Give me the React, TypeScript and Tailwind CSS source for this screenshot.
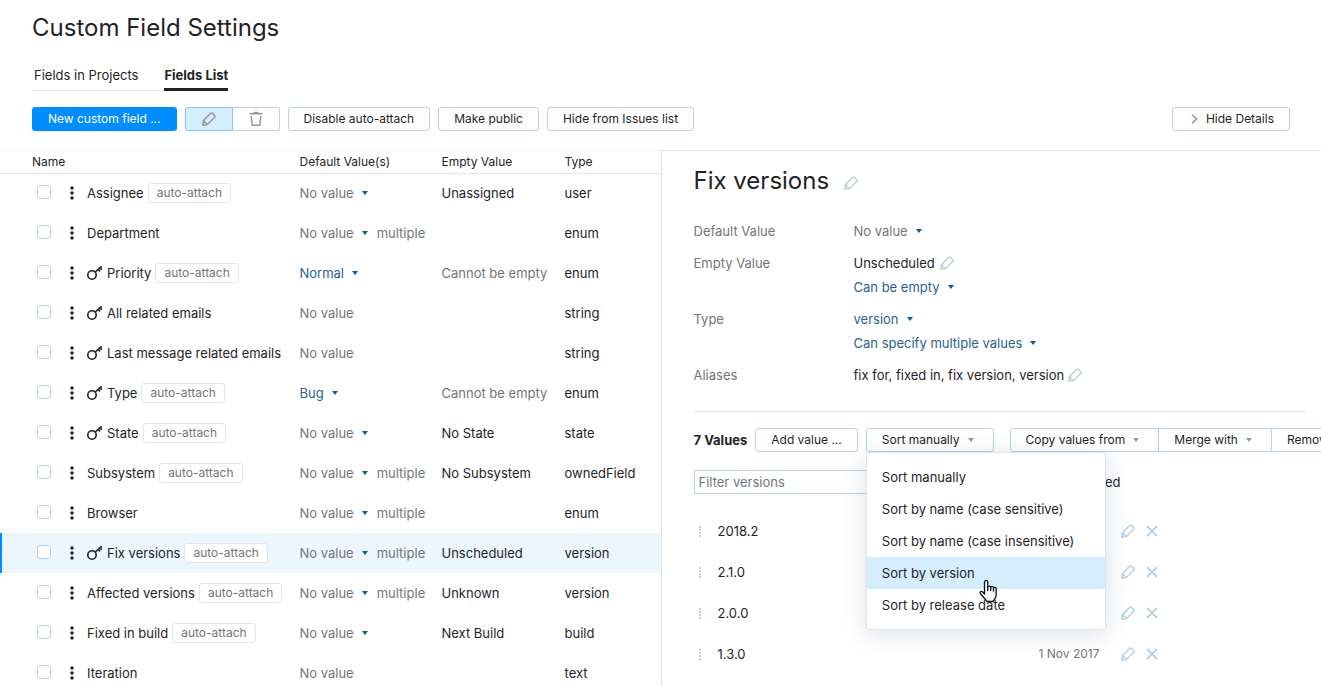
import React, { useState } from 'react';

interface Field {
  name: string;
  isPublic?: boolean;
  autoAttach?: boolean;
  value?: string;
  fixed?: boolean;
  multiple?: boolean;
  empty?: string;
  required?: boolean;
  type: string;
}

const fields: Field[] = [
  { name: 'Assignee', autoAttach: true, empty: 'Unassigned', type: 'user' },
  { name: 'Department', multiple: true, type: 'enum' },
  { name: 'Priority', isPublic: true, autoAttach: true, value: 'Normal', required: true, type: 'enum' },
  { name: 'All related emails', isPublic: true, fixed: true, type: 'string' },
  { name: 'Last message related emails', isPublic: true, fixed: true, type: 'string' },
  { name: 'Type', isPublic: true, autoAttach: true, value: 'Bug', required: true, type: 'enum' },
  { name: 'State', isPublic: true, autoAttach: true, empty: 'No State', type: 'state' },
  { name: 'Subsystem', autoAttach: true, multiple: true, empty: 'No Subsystem', type: 'ownedField' },
  { name: 'Browser', multiple: true, type: 'enum' },
  { name: 'Fix versions', isPublic: true, autoAttach: true, multiple: true, empty: 'Unscheduled', type: 'version' },
  { name: 'Affected versions', autoAttach: true, multiple: true, empty: 'Unknown', type: 'version' },
  { name: 'Fixed in build', autoAttach: true, empty: 'Next Build', type: 'build' },
  { name: 'Iteration', fixed: true, type: 'text' },
];

const versions = [
  { name: '2018.2', date: '' },
  { name: '2.1.0', date: '' },
  { name: '2.0.0', date: '' },
  { name: '1.3.0', date: '1 Nov 2017' },
];

const sortOptions = [
  'Sort manually',
  'Sort by name (case sensitive)',
  'Sort by name (case insensitive)',
  'Sort by version',
  'Sort by release date',
];

const button = 'flex h-6 shrink-0 items-center whitespace-nowrap rounded-[3px] border border-[#b8d1e5] bg-white px-[15px] text-xs';

const Pencil = () => (
  <svg className="size-4" viewBox="0 0 16 16" fill="none" stroke="currentColor" strokeWidth="1.5" strokeLinejoin="round">
    <path d="M1.8 14.2 2.5 9.6 9.7 2.3a1.2 1.2 0 0 1 1.7 0l2.3 2.3a1.2 1.2 0 0 1 0 1.7l-7.3 7.2zM2.5 9.8l3.7 3.7" />
  </svg>
);

const Trash = () => (
  <svg className="size-4" viewBox="0 0 16 16" fill="none" stroke="currentColor" strokeWidth="1.5">
    <path d="M1.5 2.7h13M5.5 1.5h5M3.2 5l1 9.2h7.6l1-9.2" />
  </svg>
);

const Key = () => (
  <svg className="size-4 shrink-0" viewBox="0 0 16 16" fill="none" stroke="currentColor" strokeWidth="1.6">
    <circle cx="5" cy="10" r="4.2" />
    <path d="M8 7.2 14.8 1.4M11.2 4.4l1.9 2.2M13.1 2.9l1.7 1.9" />
  </svg>
);

const Close = () => (
  <svg className="size-4" viewBox="0 0 16 16" fill="none" stroke="currentColor" strokeWidth="2">
    <path d="m3 3 10 10M13 3 3 13" />
  </svg>
);

const Caret = () => (
  <svg className="h-1 w-1.5" viewBox="0 0 6 4" fill="currentColor">
    <path d="M0 0h6L3 4z" />
  </svg>
);

const Dots = () => (
  <svg className="h-4 w-1 text-[#1f2326]" viewBox="0 0 4 16" fill="currentColor">
    <circle cx="2" cy="3" r="1.7" />
    <circle cx="2" cy="8" r="1.7" />
    <circle cx="2" cy="13" r="1.7" />
  </svg>
);

const Grip = () => (
  <svg className="h-3 w-0.5 text-[#b8d1e5]" viewBox="0 0 2 12" fill="currentColor">
    <path d="M0 1h2v2H0zM0 4h2v2H0zM0 7h2v2H0zM0 10h2v2H0z" />
  </svg>
);

const Pointer = () => (
  <svg className="pointer-events-none absolute left-[111px] top-[126px] h-6 w-5" viewBox="0 0 20 24" fill="#f7f7f7" stroke="#111" strokeWidth="1.3" strokeLinejoin="round">
    <path d="M6.5 13V3a1.6 1.6 0 0 1 3.2 0v5.5a1.5 1.5 0 0 1 3 .3 1.4 1.4 0 0 1 2.800.6 1.3 1.3 0 0 1 2.700.7V16c0 2-1.200 3-1.600 4.500L15 22.500H9L7 20l-4.700-5.500c-1-1.600 1-2.800 2.200-1.700L6.500 15z" />
    <path d="M9.700 8.500V12M12.700 9v3M15.500 10v2.500" />
  </svg>
);

const Picker: React.FC<{ label: string; muted?: boolean }> = ({ label, muted }) => (
  <button className={muted ? 'flex items-center gap-2 text-[#737577]' : 'flex items-center gap-2 text-[#2a5f8f]'}>
    {label}
    <span className="mr-px text-[#0f5b99]"><Caret /></span>
  </button>
);

const FieldRow: React.FC<{ field: Field; selected: boolean; onSelect: () => void }> = ({ field, selected, onSelect }) => (
  <tr onClick={onSelect} className={selected ? 'h-10 bg-[#ebf6ff]' : 'h-10'}>
    <td className={selected ? 'border-l-2 border-[#008eff] p-0' : 'border-l-2 border-transparent p-0'}>
      <div className="flex items-center pl-[35px]">
        <input
          type="checkbox"
          aria-label={field.name}
          className="mb-0.5 size-3.5 appearance-none rounded-[3px] border border-[#b8d1e5] bg-white checked:bg-[#008eff]"
        />
        <button aria-label="More actions" className="ml-[19px] mr-[13px]"><Dots /></button>
        {field.isPublic && <span className="mr-1 text-[#1f2326]"><Key /></span>}
        <span className="whitespace-nowrap">{field.name}</span>
        {field.autoAttach && (
          <span className="ml-1 flex h-5 items-center whitespace-nowrap rounded-[3px] border border-[#dfe5eb] bg-white px-2 text-xs text-[#737577]">
            auto-attach
          </span>
        )}
      </div>
    </td>
    <td className="p-0">
      <div className="flex items-center gap-2 whitespace-nowrap text-[#737577]">
        {field.fixed ? 'No value' : <Picker label={field.value ?? 'No value'} muted={!field.value} />}
        {field.multiple && <span>multiple</span>}
      </div>
    </td>
    <td className="whitespace-nowrap p-0">
      {field.required ? <span className="text-[#737577]">Cannot be empty</span> : field.empty}
    </td>
    <td className="p-0">{field.type}</td>
  </tr>
);

const Details = () => (
  <section className="min-w-0 flex-1 overflow-hidden border-l border-t border-[#dfe5eb] pl-8">
    <div className="flex h-15 items-center gap-3.5">
      <h2 className="text-2xl">Fix versions</h2>
      <button aria-label="Rename field" className="mt-1 text-[#b8d1e5]"><Pencil /></button>
    </div>

    <dl className="mt-2 grid grid-cols-[160px_1fr] gap-y-2 leading-6">
      <dt className="text-[#737577]">Default Value</dt>
      <dd><Picker label="No value" muted /></dd>
      <dt className="text-[#737577]">Empty Value</dt>
      <dd>
        <div className="flex items-center gap-1">
          Unscheduled
          <button aria-label="Edit empty value" className="text-[#b8d1e5]"><Pencil /></button>
        </div>
        <Picker label="Can be empty" />
      </dd>
      <dt className="text-[#737577]">Type</dt>
      <dd>
        <Picker label="version" />
        <Picker label="Can specify multiple values" />
      </dd>
      <dt className="text-[#737577]">Aliases</dt>
      <dd className="flex items-center gap-[3px]">
        fix for, fixed in, fix version, version
        <button aria-label="Edit aliases" className="text-[#b8d1e5]"><Pencil /></button>
      </dd>
    </dl>

    <hr className="mr-[15px] mt-6 border-[#dfe5eb]" />

    <div className="mt-4 flex items-center">
      <h3 className="mr-2 whitespace-nowrap font-bold">7 Values</h3>
      <button className={`${button} mr-2`}>Add value ...</button>
      <div className="relative mr-4 shrink-0">
        <button className={`${button} gap-2`}>
          Sort manually
          <span className="mr-1 text-[#999]"><Caret /></span>
        </button>
        <ul className="absolute left-0 top-6 z-10 w-60 rounded-[2px] border border-[#dfe5eb] bg-white py-2 shadow-[0_4px_24px_rgba(0,42,76,0.15)]">
          {sortOptions.map(option => (
            <li key={option}>
              <button className={option === 'Sort by version' ? 'h-8 w-full bg-[#d4edff] px-[15px] text-left' : 'h-8 w-full px-[15px] text-left'}>
                {option}
              </button>
            </li>
          ))}
          <Pointer />
        </ul>
      </div>
      <button className={`${button} gap-2 rounded-r-none`}>
        Copy values from
        <span className="mr-1 text-[#999]"><Caret /></span>
      </button>
      <button className={`${button} -ml-px gap-2 rounded-none`}>
        Merge with
        <span className="mr-1 text-[#999]"><Caret /></span>
      </button>
      <button className={`${button} -ml-px rounded-l-none`}>Remove</button>
    </div>

    <div className="mt-[18px] flex w-[427px] items-center justify-between">
      <input
        type="text"
        aria-label="Filter versions"
        placeholder="Filter versions"
        className="h-6 w-[280px] border border-[#b8d1e5] px-1 placeholder:text-[#737577]"
      />
      <label className="flex items-center gap-2">
        <input type="checkbox" className="size-3.5 appearance-none rounded-[3px] border border-[#b8d1e5]" />
        Show archived
      </label>
    </div>

    <ul className="mt-4 w-[466px]">
      {versions.map(version => (
        <li key={version.name} className="flex h-[41px] items-center pl-[5px]">
          <Grip />
          <span className="ml-[17px] flex-1">{version.name}</span>
          <span className="text-xs text-[#737577]">{version.date}</span>
          <button aria-label={`Edit ${version.name}`} className="ml-5 text-[#b8d1e5]"><Pencil /></button>
          <button aria-label={`Delete ${version.name}`} className="ml-2 text-[#b8d1e5]"><Close /></button>
        </li>
      ))}
    </ul>
  </section>
);

const App: React.FC = () => {
  const [selected, setSelected] = useState('Fix versions');

  return (
    <div className="flex h-screen flex-col overflow-hidden bg-white font-['Inter',sans-serif] text-[13px] leading-5 text-[#1f2326]">
      <header className="pl-8 pr-[31px] pt-3">
        <h1 className="text-2xl leading-8">Custom Field Settings</h1>
        <nav className="mt-4 flex h-[31px]">
          <a href="#projects" className="border-b border-[#dfe5eb] pl-0.5 pr-[26px] pt-[5px]">Fields in Projects</a>
          <a href="#list" className="border-b-3 border-[#1f2326] pt-[5px] font-bold">Fields List</a>
        </nav>
        <div className="mt-4 flex items-center gap-2">
          <button className="h-6 whitespace-nowrap rounded-[3px] bg-[#008eff] px-4 text-xs text-white">New custom field ...</button>
          <div className="flex text-[#999]">
            <button aria-label="Edit" className="flex h-6 w-12 items-center justify-center rounded-l-[3px] border border-[#80c6ff] bg-[#d4edff]"><Pencil /></button>
            <button aria-label="Delete" className="flex h-6 w-[47px] items-center justify-center rounded-r-[3px] border border-l-0 border-[#b8d1e5]"><Trash /></button>
          </div>
          <button className={button}>Disable auto-attach</button>
          <button className={button}>Make public</button>
          <button className={button}>Hide from Issues list</button>
          <button className={`${button} ml-auto gap-1.5`}>
            <svg className="size-3 text-[#999]" viewBox="0 0 12 12" fill="none" stroke="currentColor" strokeWidth="1.5">
              <path d="m4 1.500 4.500 4.500L4 10.500" />
            </svg>
            Hide Details
          </button>
        </div>
      </header>

      <main className="mt-[19px] flex min-h-0 flex-1">
        <section className="w-1/2 overflow-hidden border-t border-[#f0f2f4]">
          <table className="w-full table-fixed border-separate border-spacing-0">
            <thead className="text-left text-xs">
              <tr className="h-[22px] shadow-[0_1px_0_#dfe5eb]">
                <th className="p-0 pl-8 font-normal">Name</th>
                <th className="w-[142px] p-0 font-normal">Default Value(s)</th>
                <th className="w-[123px] p-0 font-normal">Empty Value</th>
                <th className="w-24 p-0 font-normal">Type</th>
              </tr>
            </thead>
            <tbody>
              {fields.map(field => (
                <FieldRow
                  key={field.name}
                  field={field}
                  selected={field.name === selected}
                  onSelect={() => setSelected(field.name)}
                />
              ))}
            </tbody>
          </table>
        </section>
        <Details />
      </main>
    </div>
  );
};

export default App;
